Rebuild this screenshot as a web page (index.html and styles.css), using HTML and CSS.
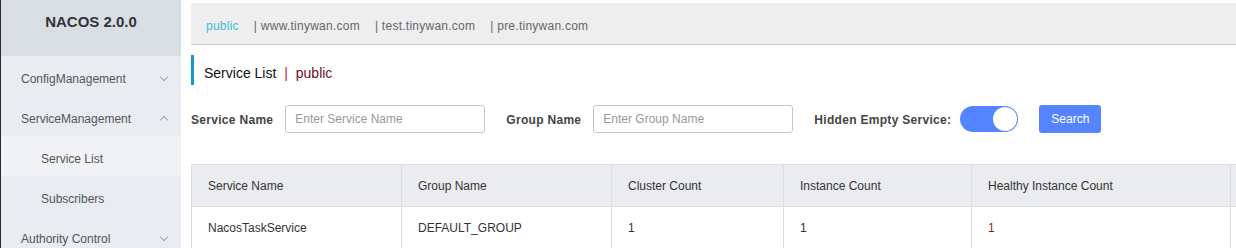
FILE: index.html
```html
<!DOCTYPE html>
<html lang="en">
<head>
  <meta charset="UTF-8" />
  <title>Nacos - Service List</title>
  <link rel="stylesheet" href="styles.css">
</head>
<body>

  <!-- Sidebar -->
  <aside class="sidebar">
    <div class="brand">NACOS 2.0.0</div>
    <ul class="menu">
      <li class="menu-item">ConfigManagement <span class="arrow down"></span></li>
      <li class="menu-item">ServiceManagement <span class="arrow up"></span></li>
      <li class="menu-item sub active">Service List</li>
      <li class="menu-item sub">Subscribers</li>
      <li class="menu-item">Authority Control <span class="arrow down"></span></li>
    </ul>
  </aside>

  <!-- Main -->
  <main class="content">
    <div class="namespaces">
      <span class="ns current">public</span>
      <span class="ns">| www.tinywan.com</span>
      <span class="ns">| test.tinywan.com</span>
      <span class="ns">| pre.tinywan.com</span>
    </div>

    <h1 class="page-title">Service List <span class="sep">|</span> <span class="ns-name">public</span></h1>

    <div class="search-form">
      <label class="field-label">Service Name</label>
      <input class="field-input" type="text" placeholder="Enter Service Name" />
      <label class="field-label">Group Name</label>
      <input class="field-input" type="text" placeholder="Enter Group Name" />
      <label class="field-label switch-label">Hidden Empty Service:</label>
      <span class="switch"><span class="knob"></span></span>
      <button class="btn-search">Search</button>
    </div>

    <table class="service-table">
      <colgroup>
        <col style="width: 210px">
        <col style="width: 210px">
        <col style="width: 172px">
        <col style="width: 188px">
        <col style="width: 259px">
        <col style="width: 200px">
      </colgroup>
      <thead>
        <tr>
          <th>Service Name</th>
          <th>Group Name</th>
          <th>Cluster Count</th>
          <th>Instance Count</th>
          <th>Healthy Instance Count</th>
          <th></th>
        </tr>
      </thead>
      <tbody>
        <tr>
          <td>NacosTaskService</td>
          <td>DEFAULT_GROUP</td>
          <td>1</td>
          <td>1</td>
          <td class="healthy">1</td>
          <td></td>
        </tr>
      </tbody>
    </table>
  </main>

</body>
</html>
```

FILE: styles.css
```css
html {
  overflow: hidden;
}

body {
  margin: 0;
  display: flex;
  height: 248px;
  overflow: hidden;
  font-family: "Liberation Sans", Arial, sans-serif;
  color: #333;
  background-color: white;
}

.sidebar {
  width: 180px;
  flex-shrink: 0;
  border-left: 1px solid #2b2b2b;
  background-color: #e9ecf1;
}

.brand {
  height: 56px;
  line-height: 44px;
  text-align: center;
  font-size: 15px;
  font-weight: bold;
  color: #333;
  background-color: #d9dee5;
}

.menu {
  list-style: none;
  margin: 0;
  padding: 0;
}

.menu-item {
  position: relative;
  height: 40px;
  line-height: 46px;
  padding-left: 20px;
  font-size: 12px;
  color: #555;
}

.menu-item.sub {
  padding-left: 40px;
}

.menu-item.active {
  background-color: #f1f2f5;
}

.arrow {
  position: absolute;
  right: 14px;
  top: 18px;
  width: 5px;
  height: 5px;
  border-right: 1px solid #a3a7b0;
  border-bottom: 1px solid #a3a7b0;
}

.arrow.down {
  transform: rotate(45deg);
}

.arrow.up {
  top: 21px;
  transform: rotate(-135deg);
}

.content {
  flex: 1;
  min-width: 0;
  overflow: hidden;
  padding: 3px 0 0 10px;
}

.namespaces {
  height: 41px;
  display: flex;
  align-items: center;
  padding-left: 15px;
  background-color: #eeeeee;
  border-bottom: 1px solid #cccccc;
  font-size: 12px;
  color: #666;
}

.ns {
  margin-right: 15px;
  padding-top: 4px;
  letter-spacing: 0.25px;
}

.ns.current {
  color: #33bfd9;
}

.page-title {
  margin: 10px 0 0 0;
  height: 30px;
  line-height: 37px;
  padding-left: 10px;
  border-left: 3px solid #1597cf;
  font-size: 14px;
  font-weight: normal;
  color: #111;
}

.page-title .sep {
  margin: 0 4px;
  color: #b3214a;
}

.page-title .ns-name {
  color: #6e1024;
}

.search-form {
  margin-top: 20px;
  display: flex;
  align-items: center;
  height: 28px;
}

.field-label {
  font-size: 12px;
  font-weight: bold;
  letter-spacing: 0.3px;
  color: #444;
  margin-right: 12px;
  padding-top: 2px;
}

.field-label.switch-label {
  margin-right: 9px;
}

.field-input {
  width: 200px;
  height: 28px;
  box-sizing: border-box;
  margin-right: 21px;
  padding: 0 9px;
  border: 1px solid #c4c6cf;
  border-radius: 3px;
  font-family: inherit;
  font-size: 12px;
  color: #333;
  outline: none;
}

.field-input::placeholder {
  color: #999;
}

.switch {
  position: relative;
  width: 58px;
  height: 26px;
  margin-right: 21px;
  border-radius: 13px;
  background-color: #5584ff;
}

.knob {
  position: absolute;
  right: 1px;
  top: 1px;
  width: 24px;
  height: 24px;
  border-radius: 50%;
  background-color: white;
}

.btn-search {
  width: 62px;
  height: 28px;
  border: none;
  border-radius: 3px;
  background-color: #5584ff;
  color: white;
  font-family: inherit;
  font-size: 12px;
  cursor: pointer;
}

.service-table {
  margin-top: 31px;
  border-collapse: collapse;
  table-layout: fixed;
  width: 1239px;
  font-size: 12px;
  color: #333;
}

.service-table th,
.service-table td {
  height: 41px;
  padding: 0 16px;
  text-align: left;
  border: 1px solid #dcdee3;
  white-space: nowrap;
  overflow: hidden;
}

.service-table th {
  font-weight: normal;
  background-color: #ebecf0;
}

.service-table td.healthy {
  color: #8b1e2e;
}
```
